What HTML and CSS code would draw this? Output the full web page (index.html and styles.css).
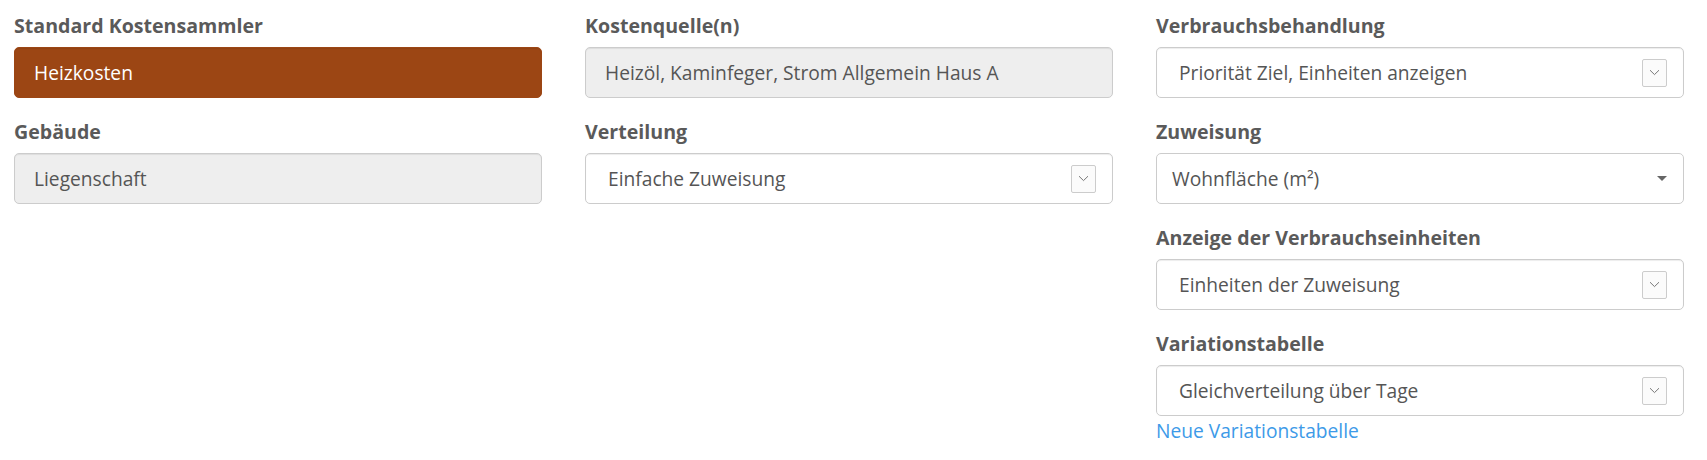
FILE: index.html
```html
<!DOCTYPE html>
<html lang="de">
<head>
  <meta charset="UTF-8">
  <title>Kostensammler</title>
  <link rel="stylesheet" href="styles.css">
</head>
<body>

<div class="form-grid">
  <div class="col">
    <div class="field">
      <label>Standard Kostensammler</label>
      <div class="box box-brown">Heizkosten</div>
    </div>
    <div class="field">
      <label>Gebäude</label>
      <div class="box box-disabled">Liegenschaft</div>
    </div>
  </div>

  <div class="col">
    <div class="field">
      <label>Kostenquelle(n)</label>
      <div class="box box-disabled">Heizöl, Kaminfeger, Strom Allgemein Haus A</div>
    </div>
    <div class="field">
      <label>Verteilung</label>
      <div class="box box-select">
        <span>Einfache Zuweisung</span>
        <span class="chevron"><svg width="11" height="7" viewBox="0 0 11 7"><path d="M1 1.2 L5.5 5.6 L10 1.2" fill="none" stroke="#777" stroke-width="1"/></svg></span>
      </div>
    </div>
  </div>

  <div class="col">
    <div class="field">
      <label>Verbrauchsbehandlung</label>
      <div class="box box-select">
        <span>Priorität Ziel, Einheiten anzeigen</span>
        <span class="chevron"><svg width="11" height="7" viewBox="0 0 11 7"><path d="M1 1.2 L5.5 5.6 L10 1.2" fill="none" stroke="#777" stroke-width="1"/></svg></span>
      </div>
    </div>
    <div class="field">
      <label>Zuweisung</label>
      <div class="box box-select2">
        <span>Wohnfläche (m²)</span>
        <span class="caret"></span>
      </div>
    </div>
    <div class="field">
      <label>Anzeige der Verbrauchseinheiten</label>
      <div class="box box-select">
        <span>Einheiten der Zuweisung</span>
        <span class="chevron"><svg width="11" height="7" viewBox="0 0 11 7"><path d="M1 1.2 L5.5 5.6 L10 1.2" fill="none" stroke="#777" stroke-width="1"/></svg></span>
      </div>
    </div>
    <div class="field field-last">
      <label>Variationstabelle</label>
      <div class="box box-select">
        <span>Gleichverteilung über Tage</span>
        <span class="chevron"><svg width="11" height="7" viewBox="0 0 11 7"><path d="M1 1.2 L5.5 5.6 L10 1.2" fill="none" stroke="#777" stroke-width="1"/></svg></span>
      </div>
      <a class="link" href="#">Neue Variationstabelle</a>
    </div>
  </div>
</div>

</body>
</html>
```

FILE: styles.css
```css
body {
  font-family: 'Open Sans', 'Liberation Sans', sans-serif;
  font-size: 19.2px;
  line-height: 27px;
  color: #555;
  background: #fff;
  margin: 0;
  padding: 12px 0 0 14px;
}
.form-grid {
  display: grid;
  grid-template-columns: 528px 528px 528px;
  column-gap: 43px;
  align-items: start;
}
.field {
  margin-bottom: 20px;
}
.field-last {
  margin-bottom: 0;
}
label {
  display: block;
  font-size: 19.6px;
  font-weight: 700;
  color: #5a5a5a;
  margin-bottom: 8px;
}
.box {
  height: 51px;
  box-sizing: border-box;
  border: 1px solid #ccc;
  border-radius: 5px;
  box-shadow: inset 0 1px 1px rgba(0, 0, 0, 0.075);
  display: flex;
  align-items: center;
  padding: 0 16px 0 19px;
  color: #555;
  white-space: nowrap;
}
.box-brown {
  background-color: #9c4614;
  border-color: #9c4614;
  color: #fff;
}
.box-disabled {
  background-color: #eee;
}
.box-select {
  justify-content: space-between;
  padding-left: 22px;
}
.box-select2 {
  justify-content: space-between;
  padding-left: 15px;
  padding-right: 16px;
  box-shadow: none;
}
.chevron {
  width: 25px;
  height: 28px;
  box-sizing: border-box;
  border: 1px solid #ccc;
  border-radius: 2px;
  background: #fbfbfb;
  display: flex;
  align-items: center;
  justify-content: center;
}
.caret {
  width: 0;
  height: 0;
  border-left: 5px solid transparent;
  border-right: 5px solid transparent;
  border-top: 5px solid #666;
}
.link {
  display: block;
  color: #3d9ae8;
  text-decoration: none;
  margin-top: 1px;
}
```
